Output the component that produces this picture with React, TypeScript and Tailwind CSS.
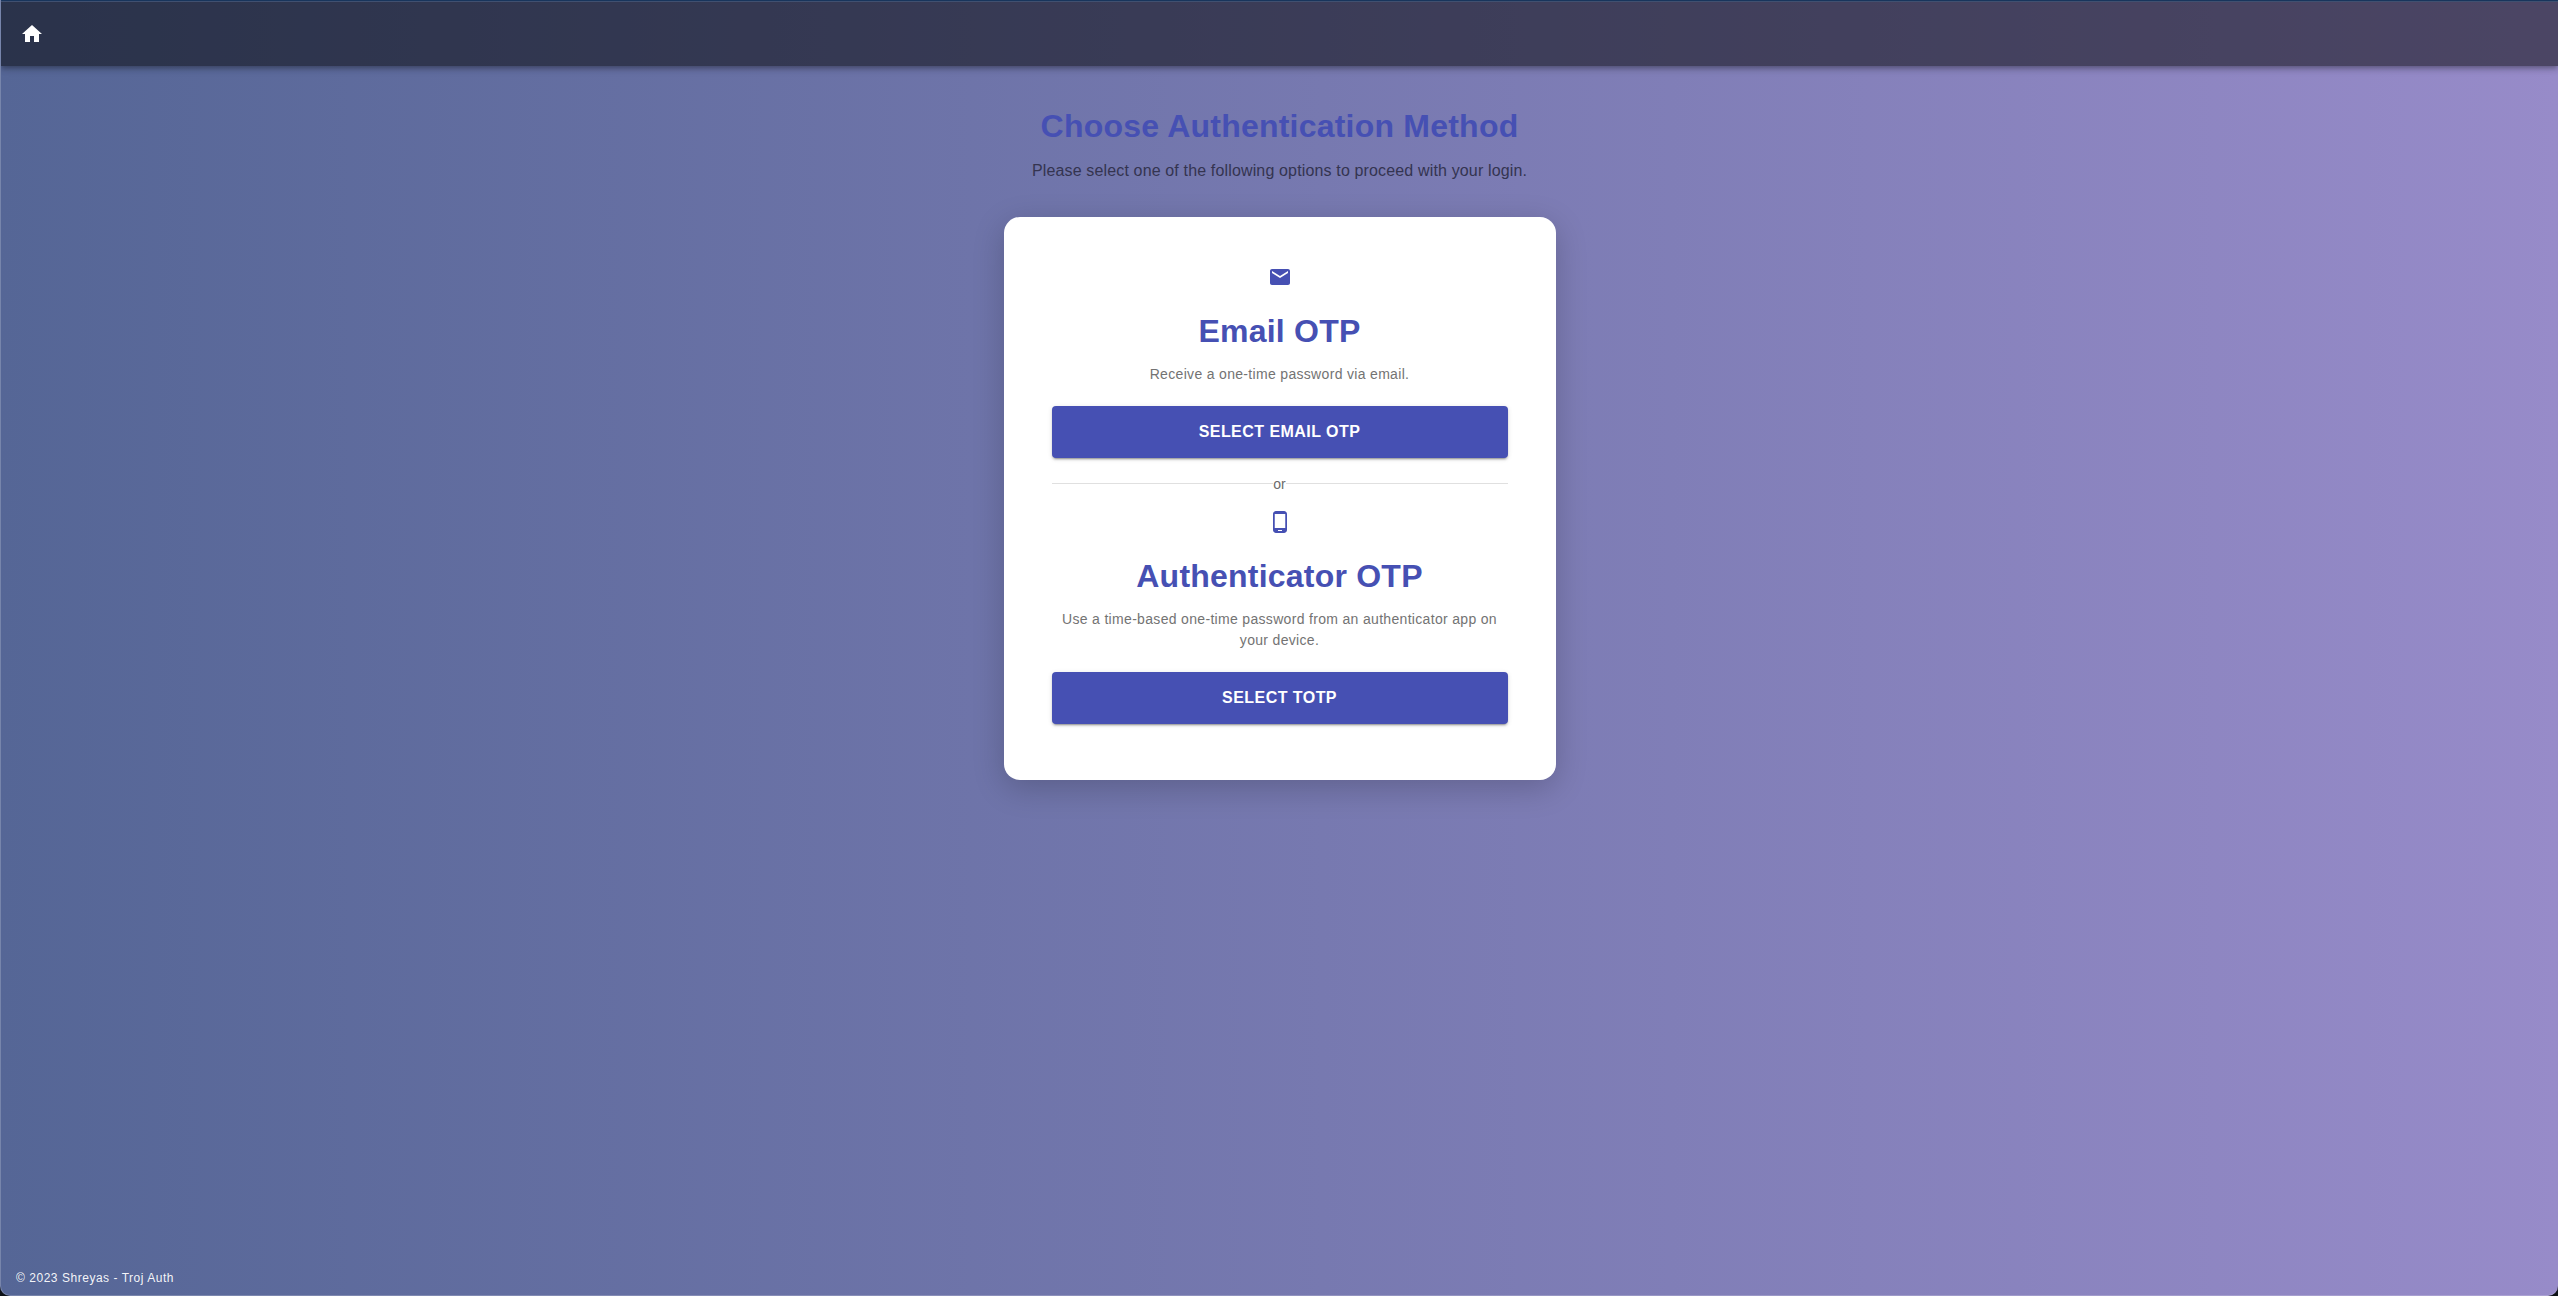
import { ReactNode } from "react";

function Icon({ path, className }: { path: string; className: string }) {
  return (
    <svg viewBox="0 0 24 24" fill="currentColor" className={className} aria-hidden="true">
      <path d={path} />
    </svg>
  );
}

const HOME = "M10 20v-6h4v6h5v-8h3L12 3 2 12h3v8z";
const EMAIL =
  "M20 4H4c-1.1 0-1.99.9-1.99 2L2 18c0 1.1.9 2 2 2h16c1.1 0 2-.9 2-2V6c0-1.1-.9-2-2-2m0 4-8 5-8-5V6l8 5 8-5z";
const PHONE =
  "M16 1H8C6.34 1 5 2.34 5 4v16c0 1.66 1.34 3 3 3h8c1.66 0 3-1.34 3-3V4c0-1.66-1.34-3-3-3m-2 20h-4v-1h4zm3.25-3H6.75V4h10.5z";

function Option({ icon, title, text, action }: { icon: string; title: string; text: ReactNode; action: string }) {
  return (
    <section className="flex flex-col items-center text-center">
      <Icon path={icon} className="size-6 text-[#4650b3]" />
      <h2 className="mt-[14px] text-[32px] leading-[56px] font-bold tracking-[0.22px] text-[#4650b3]">{title}</h2>
      <p className="mt-[5px] w-full text-[14px] leading-[21px] tracking-[0.32px] text-[#737373]">{text}</p>
      <button className="mt-[21px] h-[52px] w-full rounded bg-[#4650b3] text-base font-bold tracking-[0.46px] text-white shadow-[0_3px_1px_-2px_rgba(0,0,0,0.2),0_2px_2px_0_rgba(0,0,0,0.14),0_1px_5px_0_rgba(0,0,0,0.12)]">
        {action}
      </button>
    </section>
  );
}

export default function App() {
  return (
    <div className="h-[1296px] w-full bg-[#0d1117] font-['Liberation_Sans',Arial,sans-serif]">
      <div className="flex h-full flex-col overflow-hidden rounded-b-[10px] border-b border-l border-white/20 bg-linear-to-r from-[#556696] to-[#978bc9] bg-origin-border">
        <div className="h-px shrink-0 bg-[#1c3a63]" />
        <header className="z-10 flex h-[65px] shrink-0 items-center border-t border-[#405070] bg-black/50 px-[19px] shadow-[0_2px_4px_-1px_rgba(0,0,0,0.2),0_4px_5px_0_rgba(0,0,0,0.14),0_1px_10px_0_rgba(0,0,0,0.12)]">
          <Icon path={HOME} className="size-6 text-white" />
        </header>

        <main className="flex grow flex-col items-center pt-[39px]">
          <h1 className="text-[32px] leading-[42px] font-bold tracking-[0.22px] text-[#4650b3]">
            Choose Authentication Method
          </h1>
          <p className="mt-3 text-base leading-6 tracking-[0.15px] text-[#343450]">
            Please select one of the following options to proceed with your login.
          </p>
          <div className="mt-[34px] h-[563px] w-[552px] rounded-2xl bg-white px-12 pt-12 shadow-[0_8px_32px_rgba(0,0,0,0.2)]">
            <Option icon={EMAIL} title="Email OTP" text="Receive a one-time password via email." action="SELECT EMAIL OTP" />
            <div className="mt-4 flex h-5 items-start text-[14px] leading-5 text-[#6b6b6b]">
              <span className="mt-[9px] h-px grow bg-[#e0e0e0]" />
              <span>or</span>
              <span className="mt-[9px] h-px grow bg-[#e0e0e0]" />
            </div>
            <div className="mt-4">
              <Option
                icon={PHONE}
                title="Authenticator OTP"
                text="Use a time-based one-time password from an authenticator app on your device."
                action="SELECT TOTP"
              />
            </div>
          </div>
        </main>

        <footer className="px-[15px] pb-[7px] text-[12px] leading-5 tracking-[0.53px] text-white/95">
          © 2023 Shreyas - Troj Auth
        </footer>
      </div>
    </div>
  );
}
